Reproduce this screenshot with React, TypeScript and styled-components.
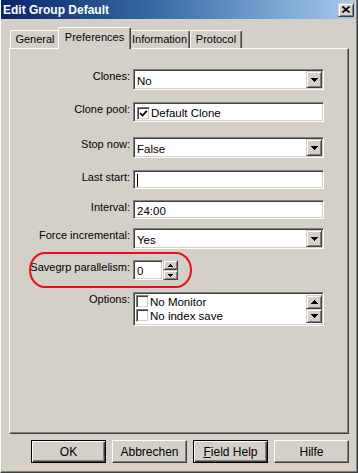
import React from "react";
import styled, { createGlobalStyle, css } from "styled-components";

const GlobalStyle = createGlobalStyle`
  html, body {
    margin: 0;
    padding: 0;
    background: #d4d0c8;
  }
  body {
    font-family: "Liberation Sans", Arial, sans-serif;
    font-size: 11px;
    color: #000;
  }
`;

const raised = css`
  background: #d4d0c8;
  border: 1px solid;
  border-color: #d4d0c8 #404040 #404040 #d4d0c8;
  box-shadow: inset 1px 1px #fff, inset -1px -1px #808080;
  box-sizing: border-box;
`;

const sunken = css`
  background: #fff;
  border: 1px solid;
  border-color: #808080 #fff #fff #808080;
  box-shadow: inset 1px 1px #404040, inset -1px -1px #d4d0c8;
  box-sizing: border-box;
`;

const Window = styled.div`
  position: relative;
  width: 358px;
  height: 473px;
  box-sizing: border-box;
  background: #d4d0c8;
  border-left: 1px solid #fff;
  border-right: 1px solid #404040;
  border-bottom: 1px solid #404040;
  box-shadow: inset -1px -1px #808080;
  display: flex;
  flex-direction: column;
`;

const TitleBar = styled.div`
  height: 19px;
  margin-right: 2px;
  background: linear-gradient(to right, #0a246a 0%, #3a6ea5 45%, #a6caf0 100%);
  display: flex;
  align-items: center;
  justify-content: space-between;
  padding: 0 1px 0 2px;
`;

const Title = styled.span`
  color: #fff;
  font-weight: bold;
  font-size: 12px;
`;

const CloseButton = styled.div`
  ${raised};
  width: 16px;
  height: 14px;
  display: flex;
  align-items: center;
  justify-content: center;
`;

const Body = styled.div`
  padding: 8px 0 0 8px;
`;

const TabStrip = styled.div`
  display: flex;
  align-items: flex-end;
  height: 21px;
  padding-left: 1px;
`;

const Tab = styled.div<{ $active?: boolean; $w: number }>`
  position: relative;
  box-sizing: border-box;
  width: ${(p) => p.$w}px;
  height: ${(p) => (p.$active ? 22 : 18)}px;
  margin: ${(p) => (p.$active ? "0 -2px -1px -2px" : "0")};
  z-index: ${(p) => (p.$active ? 2 : 1)};
  background: #d4d0c8;
  border-top: 1px solid #fff;
  border-left: 1px solid #fff;
  border-right: 1px solid #404040;
  border-top-left-radius: 2px;
  border-top-right-radius: 2px;
  box-shadow: inset -1px 0 #808080;
  display: flex;
  justify-content: center;
  padding-top: ${(p) => (p.$active ? 3 : 2)}px;
`;

const Panel = styled.div`
  position: relative;
  width: 340px;
  height: 386px;
  box-sizing: border-box;
  border: 1px solid;
  border-color: #fff #404040 #404040 #fff;
  box-shadow: inset -1px -1px #808080;
  padding-top: 20px;
`;

const Row = styled.div<{ $top?: number }>`
  display: grid;
  grid-template-columns: 120px 191px;
  column-gap: 3px;
  margin-top: ${(p) => p.$top ?? 0}px;
`;

const Label = styled.div`
  text-align: right;
  line-height: 13px;
  padding-top: 1px;
  white-space: nowrap;
`;

const Field = styled.div<{ $h: number; $w?: number }>`
  ${sunken};
  height: ${(p) => p.$h}px;
  width: ${(p) => (p.$w ? `${p.$w}px` : "auto")};
  display: flex;
  align-items: center;
  padding: 2px 2px 0 3px;
  font-size: 11.5px;
  white-space: nowrap;
`;

const Value = styled.span`
  flex: 1;
`;

const DropButton = styled.div`
  ${raised};
  width: 16px;
  height: 17px;
  margin-top: -2px;
  margin-right: -1px;
  display: flex;
  align-items: center;
  justify-content: center;
`;

const Caret = styled.span`
  width: 1px;
  height: 13px;
  background: #000;
  margin-top: -1px;
`;

const Box = styled.div`
  ${sunken};
  width: 13px;
  height: 13px;
  margin-right: 1px;
  flex: none;
  display: flex;
  align-items: center;
  justify-content: center;
`;

const SpinWrap = styled.div`
  display: flex;
  align-items: stretch;
  height: 20px;
`;

const SpinButtons = styled.div`
  display: flex;
  flex-direction: column;
  width: 15px;
`;

const SpinButton = styled.div`
  ${raised};
  flex: 1;
  display: flex;
  align-items: center;
  justify-content: center;
`;

const ListBox = styled.div`
  ${sunken};
  height: 34px;
  display: flex;
  padding: 2px 1px 2px 2px;
`;

const ListItems = styled.div`
  flex: 1;
  display: flex;
  flex-direction: column;
`;

const ListItem = styled.div`
  height: 15px;
  display: flex;
  align-items: center;
  font-size: 11.5px;
  margin-bottom: 1px;
`;

const ScrollCol = styled.div`
  width: 16px;
  display: flex;
  flex-direction: column;
`;

const ScrollButton = styled.div`
  ${raised};
  flex: 1;
  display: flex;
  align-items: center;
  justify-content: center;
`;

const Annotation = styled.div`
  position: absolute;
  left: 19px;
  top: 203px;
  width: 163px;
  height: 36px;
  box-sizing: border-box;
  border: 2px solid #e4101c;
  border-radius: 16px / 18px;
  pointer-events: none;
`;

const ButtonRow = styled.div`
  display: flex;
  justify-content: flex-end;
  gap: 6px;
  margin-top: 6px;
  padding-right: 8px;
`;

const PushButton = styled.div<{ $default?: boolean }>`
  box-sizing: border-box;
  width: 75px;
  height: 23px;
  display: flex;
  align-items: center;
  justify-content: center;
  font-size: 12px;
  background: #d4d0c8;
  border: 1px solid;
  ${(p) =>
    p.$default
      ? css`
          border-color: #000;
          box-shadow: inset 1px 1px #fff, inset -1px -1px #404040,
            inset -2px -2px #808080;
        `
      : css`
          border-color: #fff #404040 #404040 #fff;
          box-shadow: inset -1px -1px #808080;
        `}
`;

const Mnemonic = styled.span`
  text-decoration: underline;
`;

const Arrow = ({ up, size = 7 }: { up?: boolean; size?: number }) => {
  const rows = Math.ceil(size / 2);
  const rects = [];
  for (let i = 0; i < rows; i++) {
    const w = size - i * 2;
    const y = up ? rows - 1 - i : i;
    rects.push(<rect key={i} x={i} y={y} width={w} height={1} />);
  }
  return (
    <svg width={size} height={rows} shapeRendering="crispEdges" fill="#000">
      {rects}
    </svg>
  );
};

const Check = () => (
  <svg width="9" height="9" viewBox="0 0 9 9">
    <path d="M1.2 4.2 L3.5 6.6 L7.8 1.8" fill="none" stroke="#000" strokeWidth="1.8" />
  </svg>
);

const CloseGlyph = () => (
  <svg width="8" height="7" viewBox="0 0 8 7">
    <path d="M0.5 0.5 L7.5 6.5 M7.5 0.5 L0.5 6.5" stroke="#000" strokeWidth="1.6" />
  </svg>
);

const Combo = ({ value }: { value: string }) => (
  <Field $h={21}>
    <Value>{value}</Value>
    <DropButton>
      <Arrow />
    </DropButton>
  </Field>
);

export default function App() {
  return (
    <>
      <GlobalStyle />
      <Window>
        <TitleBar>
          <Title>Edit Group Default</Title>
          <CloseButton>
            <CloseGlyph />
          </CloseButton>
        </TitleBar>
        <Body>
          <TabStrip>
            <Tab $w={50}>General</Tab>
            <Tab $w={73} $active>
              Preferences
            </Tab>
            <Tab $w={61}>Information</Tab>
            <Tab $w={52}>Protocol</Tab>
          </TabStrip>
          <Panel>
            <Row>
              <Label>Clones:</Label>
              <Combo value="No" />
            </Row>
            <Row $top={12}>
              <Label>Clone pool:</Label>
              <Field $h={20}>
                <Box>
                  <Check />
                </Box>
                <Value>Default Clone</Value>
              </Field>
            </Row>
            <Row $top={15}>
              <Label>Stop now:</Label>
              <Combo value="False" />
            </Row>
            <Row $top={12}>
              <Label>Last start:</Label>
              <Field $h={19}>
                <Caret />
              </Field>
            </Row>
            <Row $top={11}>
              <Label>Interval:</Label>
              <Field $h={19}>
                <Value>24:00</Value>
              </Field>
            </Row>
            <Row $top={9}>
              <Label>Force incremental:</Label>
              <Combo value="Yes" />
            </Row>
            <Row $top={11}>
              <Label>Savegrp parallelism:</Label>
              <SpinWrap>
                <Field $h={20} $w={30}>
                  <Value>0</Value>
                </Field>
                <SpinButtons>
                  <SpinButton>
                    <Arrow up size={5} />
                  </SpinButton>
                  <SpinButton>
                    <Arrow size={5} />
                  </SpinButton>
                </SpinButtons>
              </SpinWrap>
            </Row>
            <Row $top={12}>
              <Label>Options:</Label>
              <ListBox>
                <ListItems>
                  <ListItem>
                    <Box />
                    No Monitor
                  </ListItem>
                  <ListItem>
                    <Box />
                    No index save
                  </ListItem>
                </ListItems>
                <ScrollCol>
                  <ScrollButton>
                    <Arrow up />
                  </ScrollButton>
                  <ScrollButton>
                    <Arrow />
                  </ScrollButton>
                </ScrollCol>
              </ListBox>
            </Row>
            <Annotation />
          </Panel>
          <ButtonRow>
            <PushButton $default>OK</PushButton>
            <PushButton>Abbrechen</PushButton>
            <PushButton $default>
              <Mnemonic>F</Mnemonic>ield Help
            </PushButton>
            <PushButton>Hilfe</PushButton>
          </ButtonRow>
        </Body>
      </Window>
    </>
  );
}
